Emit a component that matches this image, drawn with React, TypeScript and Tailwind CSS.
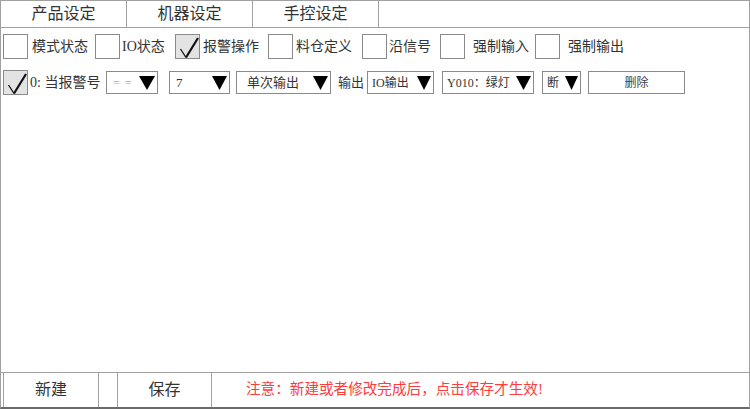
import React from "react";

const FONT = "[font-family:'Liberation_Serif','Noto_Sans_CJK_SC',serif]";

function Check() {
  return (
    <svg width="25" height="25" viewBox="0 0 25 25" className="block">
      <line x1="4.5" y1="14" x2="10" y2="22.5" stroke="#111" strokeWidth="1.3" />
      <line x1="10" y1="22.5" x2="22" y2="3" stroke="#111" strokeWidth="2.2" />
    </svg>
  );
}

function Box({ checked }: { checked?: boolean }) {
  return (
    <div
      className={`w-[25px] h-[25px] shrink-0 border border-[#8a8a8a] ${checked ? "bg-[#e3e3e3]" : "bg-white"}`}
    >
      {checked ? <Check /> : null}
    </div>
  );
}

function Tri({ w }: { w: number }) {
  return (
    <svg width={w} height="14" viewBox={`0 0 ${w} 14`} className="block shrink-0">
      <polygon points={`0,0 ${w},0 ${w / 2},14`} fill="#000" />
    </svg>
  );
}

function Drop({
  w,
  text,
  textCls,
  pl,
  tw,
}: {
  w: string;
  text: string;
  textCls?: string;
  pl: string;
  tw: number;
}) {
  return (
    <div
      className={`${w} h-[23px] border border-[#8a8a8a] bg-white flex items-center justify-between ${pl} pr-[2px] shrink-0`}
    >
      <span className={`leading-none whitespace-nowrap ${textCls ?? "text-[13px] text-[#333]"}`}>{text}</span>
      <Tri w={tw} />
    </div>
  );
}

export default function App() {
  return (
    <div
      className={`w-[750px] h-[409px] bg-white border border-[#a0a0a0] border-b-2 border-b-[#6a6a6a] flex flex-col text-[#333] ${FONT}`}
    >
      {/* tabs */}
      <div className="h-[27px] border-b border-[#a0a0a0] flex shrink-0">
        {["产品设定", "机器设定", "手控设定"].map((t) => (
          <div
            key={t}
            className="w-[126px] border-r border-[#a0a0a0] flex items-center justify-center text-[16px] leading-none"
          >
            {t}
          </div>
        ))}
        <div className="flex-1" />
      </div>

      {/* row 1 */}
      <div className="flex items-center mt-[6px] pl-[2px] text-[14px] leading-none">
        <Box />
        <span className="ml-[4px] w-[63px]">模式状态</span>
        <Box />
        <span className="ml-[2px] w-[53px]">IO状态</span>
        <Box checked />
        <span className="ml-[3px] w-[65px]">报警操作</span>
        <Box />
        <span className="ml-[3px] w-[66px]">料仓定义</span>
        <Box />
        <span className="ml-[2px] w-[51px]">沿信号</span>
        <Box />
        <span className="ml-[8px] w-[62px]">强制输入</span>
        <Box />
        <span className="ml-[8px]">强制输出</span>
      </div>

      {/* row 2 */}
      <div className="flex items-center mt-[11px] pl-[2px] leading-none">
        <Box checked />
        <span className="ml-[2px] w-[76px] text-[14px] whitespace-nowrap">0: 当报警号</span>
        <Drop
          w="w-[52px]"
          pl="pl-[6px]"
          tw={16}
          text="= ="
          textCls="text-[12px] text-[#aaa] tracking-[1px]"
        />
        <div className="w-[11px] shrink-0" />
        <Drop w="w-[61px]" pl="pl-[6px]" tw={15} text="7" />
        <div className="w-[6px] shrink-0" />
        <Drop w="w-[95px]" pl="pl-[10px]" tw={15} text="单次输出" />
        <span className="ml-[7px] w-[29px] text-[13px]">输出</span>
        <Drop w="w-[67px]" pl="pl-[4px]" tw={14} text="IO输出" textCls="text-[12px] text-[#333]" />
        <div className="w-[8px] shrink-0" />
        <Drop
          w="w-[92px]"
          pl="pl-[4px]"
          tw={15}
          text="Y010：绿灯"
          textCls="text-[12px] text-[#333]"
        />
        <div className="w-[8px] shrink-0" />
        <Drop w="w-[39px]" pl="pl-[4px]" tw={13} text="断" textCls="text-[12px] text-[#333]" />
        <div className="w-[7px] shrink-0" />
        <div className="w-[97px] h-[23px] border border-[#8a8a8a] flex items-center justify-center text-[12px] text-[#444]">
          删除
        </div>
      </div>

      <div className="flex-1" />

      {/* bottom bar */}
      <div className="h-[35px] border-t border-[#a0a0a0] flex items-stretch pl-[2px] shrink-0">
        <div className="w-[96px] border-l border-r border-[#a0a0a0] flex items-center justify-center text-[16px]">
          新建
        </div>
        <div className="w-[18px]" />
        <div className="w-[95px] border-l border-r border-[#a0a0a0] flex items-center justify-center text-[16px]">
          保存
        </div>
        <div className="flex items-center pl-[34px] text-[14.6px] text-[#ff3b3b] whitespace-nowrap">
          注意：新建或者修改完成后，点击保存才生效!
        </div>
      </div>
    </div>
  );
}
